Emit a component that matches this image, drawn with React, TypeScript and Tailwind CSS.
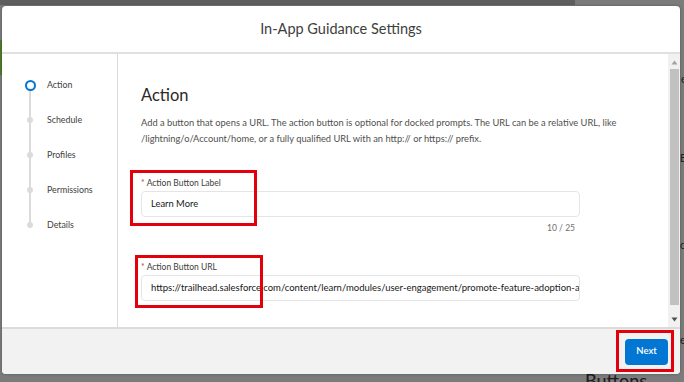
import React from 'react';

const steps = ['Action', 'Schedule', 'Profiles', 'Permissions', 'Details'];

const font = { fontFamily: 'Lato, "Open Sans", sans-serif' };

const Stepper: React.FC = () => (
  <div className="relative pl-[21px] pt-[24px]">
    <div className="absolute left-[27px] top-[30px] h-[140px] w-[1.5px] bg-[#dddbda]" />
    {steps.map((s, i) => (
      <div key={s} className="relative flex h-[35px] items-start">
        <div className="flex h-[14px] w-[14px] items-center justify-center">
          {i === 0 ? (
            <span className="h-[11px] w-[11px] rounded-full border-[2.5px] border-[#0176d3] bg-white" />
          ) : (
            <span className="h-[6px] w-[6px] rounded-full bg-[#dddbda]" />
          )}
        </div>
        <span className="ml-[10px] text-[8.8px] leading-[14px] text-[#3e3e3c]">{s}</span>
      </div>
    ))}
  </div>
);

const RedBox: React.FC<{ className: string }> = ({ className }) => (
  <div className={`pointer-events-none absolute border-[3px] border-[#e3000b] ${className}`} />
);

export default function App() {
  return (
    <div className="relative h-[382px] w-[684px] overflow-hidden bg-[#7b7b7b]" style={font}>
      {/* page behind the overlay */}
      <div className="absolute left-0 top-0 h-[5px] w-[575px] bg-[#5e5e5e]" />
      <div className="absolute left-0 top-[40px] h-[35px] w-[2px] bg-[#4f7a2c]" />
      <span className="absolute left-[681px] top-[73px] text-[11px] leading-[12px] text-[#222]">e</span>
      <span className="absolute left-[680px] top-[152px] text-[11px] leading-[12px] text-[#222]">B</span>
      <span className="absolute left-[680px] top-[239px] text-[11px] leading-[12px] text-[#222]">c</span>
      <span className="absolute left-[680px] top-[334px] text-[11px] leading-[12px] text-[#222]">e</span>
      <span className="absolute left-[585px] top-[367px] text-[18px] font-medium text-[#1e1e1e]">Buttons</span>

      <div className="relative pl-[2px] pt-[6px]">
        <div className="flex h-[368px] w-[678px] flex-col overflow-hidden rounded-[4px] bg-white shadow-[0_0_3px_rgba(0,0,0,0.3)]">
          <header className="flex h-[48px] shrink-0 items-center justify-center border-b-2 border-[#e1e0df]">
            <h1 className="text-[14.5px] font-normal text-[#3e3e3c]">In-App Guidance Settings</h1>
          </header>

          <div className="flex h-[273px] shrink-0">
            <aside className="w-[116px] shrink-0 border-r border-[#dddbda]">
              <Stepper />
            </aside>

            <main className="relative flex-1 pl-[23px] pt-[29px] text-[#3e3e3c]">
              <h2 className="text-[16.5px] leading-[24px] font-normal text-[#2b2826]">Action</h2>
              <p className="mt-[8px] whitespace-nowrap text-[9.3px] leading-[16px] text-[#514f4d]">
                Add a button that opens a URL. The action button is optional for docked prompts. The URL can be a relative URL, like
                <br />
                /lightning/o/Account/home, or a fully qualified URL with an http:// or https:// prefix.
              </p>

              <label className="mt-[30px] block text-[8.5px] leading-[12px] text-[#3e3e3c]">
                <span className="mr-[2px] text-[#c23934]">*</span>Action Button Label
              </label>
              <div className="mt-[2px] flex h-[26px] w-[439px] items-center rounded-[4px] border border-[#e5e5e5] pl-[9px] text-[9.4px] text-[#181818]">
                Learn More
              </div>
              <div className="mt-[5px] w-[434px] text-right text-[8.5px] leading-[12px] text-[#706e6b]">10 / 25</div>

              <label className="mt-[27px] block text-[8.5px] leading-[12px] text-[#3e3e3c]">
                <span className="mr-[2px] text-[#c23934]">*</span>Action Button URL
              </label>
              <div className="mt-[2px] flex h-[26px] w-[439px] items-center overflow-hidden whitespace-nowrap rounded-[4px] border border-[#e5e5e5] pl-[9px] pr-[4px] text-[9.5px] text-[#181818]">
                https://trailhead.salesforce.com/content/learn/modules/user-engagement/promote-feature-adoption-and-retention
              </div>

              <RedBox className="left-[12px] top-[116px] h-[56px] w-[127px]" />
              <RedBox className="left-[17px] top-[201px] h-[53px] w-[128px]" />
            </main>

            <div className="flex w-[12px] shrink-0 flex-col items-center bg-[#f1f1f1] py-[4px]">
              <svg width="7" height="5" viewBox="0 0 7 5" className="mt-[2px]">
                <path d="M3.5 0.5L6.5 4.5H0.5Z" fill="#a3a3a3" />
              </svg>
              <div className="mt-[4px] w-[9px] flex-1 bg-[#c1c1c1]" />
              <div className="h-[12px]" />
              <svg width="7" height="5" viewBox="0 0 7 5" className="mb-[1px]">
                <path d="M0.5 0.5H6.5L3.5 4.5Z" fill="#505050" />
              </svg>
            </div>
          </div>

          <footer className="relative flex flex-1 items-center justify-end border-t-2 border-[#dddbda] bg-[#f3f2f2] pr-[12px]">
            <button className="h-[26px] w-[43px] rounded-[4px] bg-[#0176d3] text-[9.5px] font-semibold text-white">
              Next
            </button>
            <RedBox className="right-[6px] top-[1px] h-[42px] w-[58px]" />
          </footer>
        </div>
      </div>
    </div>
  );
}
